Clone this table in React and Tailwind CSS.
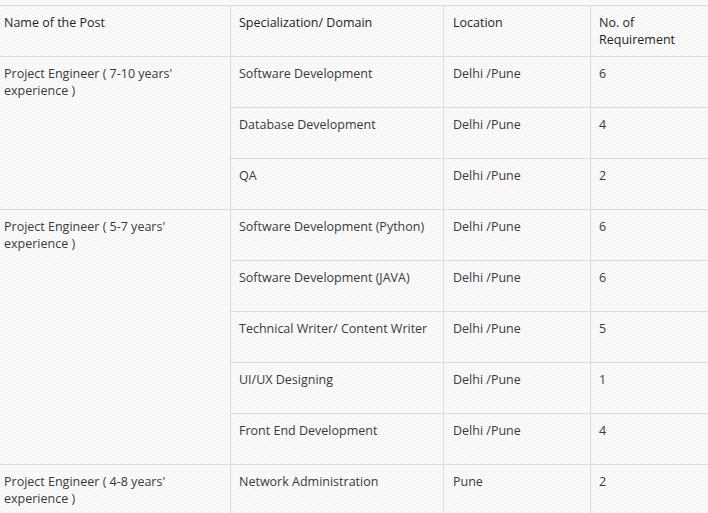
// Vacancy table: post / specialization / location / count

const groups = [
  {
    post: "Project Engineer ( 7-10 years' experience )",
    rows: [
      ["Software Development", "Delhi /Pune", "6"],
      ["Database Development", "Delhi /Pune", "4"],
      ["QA", "Delhi /Pune", "2"],
    ],
  },
  {
    post: "Project Engineer ( 5-7 years' experience )",
    rows: [
      ["Software Development (Python)", "Delhi /Pune", "6"],
      ["Software Development (JAVA)", "Delhi /Pune", "6"],
      ["Technical Writer/ Content Writer", "Delhi /Pune", "5"],
      ["UI/UX Designing", "Delhi /Pune", "1"],
      ["Front End Development", "Delhi /Pune", "4"],
    ],
  },
  {
    post: "Project Engineer ( 4-8 years' experience )",
    rows: [["Network Administration", "Pune", "2"]],
  },
];

const cell = "border border-[#dcdcdc] align-top pt-[8px] pb-0 px-2 h-[51px]";
const head = `${cell} text-left font-normal text-[#1f1f1f]`;

export default function App() {
  return (
    <div
      className="w-[708px] h-[513px] overflow-hidden pt-[5px] bg-[#f8f8f8] bg-[repeating-conic-gradient(#f5f5f5_0%_25%,#fbfbfb_0%_50%)] bg-[length:4px_4px] text-[12.5px] leading-[17px] text-[#3a3a3a]"
      style={{ fontFamily: '"Open Sans", "Noto Sans", sans-serif' }}
    >
      <table className="border-collapse table-fixed w-[716px] -ml-[5px]">
        <colgroup>
          <col className="w-[235px]" />
          <col className="w-[213px]" />
          <col className="w-[147px]" />
          <col className="w-[121px]" />
        </colgroup>
        <thead>
          <tr>
            <th className={head}>Name of the Post</th>
            <th className={head}>Specialization/ Domain</th>
            <th className={`${head} pl-[9px]`}>Location</th>
            <th className={head}>
              No. of
              <br />
              Requirement
            </th>
          </tr>
        </thead>
        <tbody>
          {groups.map((g) =>
            g.rows.map((r, i) => (
              <tr key={g.post + r[0]}>
                {i === 0 && (
                  <td className={cell} rowSpan={g.rows.length}>
                    {g.post}
                  </td>
                )}
                <td className={cell}>{r[0]}</td>
                <td className={`${cell} pl-[9px]`}>{r[1]}</td>
                <td className={cell}>{r[2]}</td>
              </tr>
            ))
          )}
        </tbody>
      </table>
    </div>
  );
}
